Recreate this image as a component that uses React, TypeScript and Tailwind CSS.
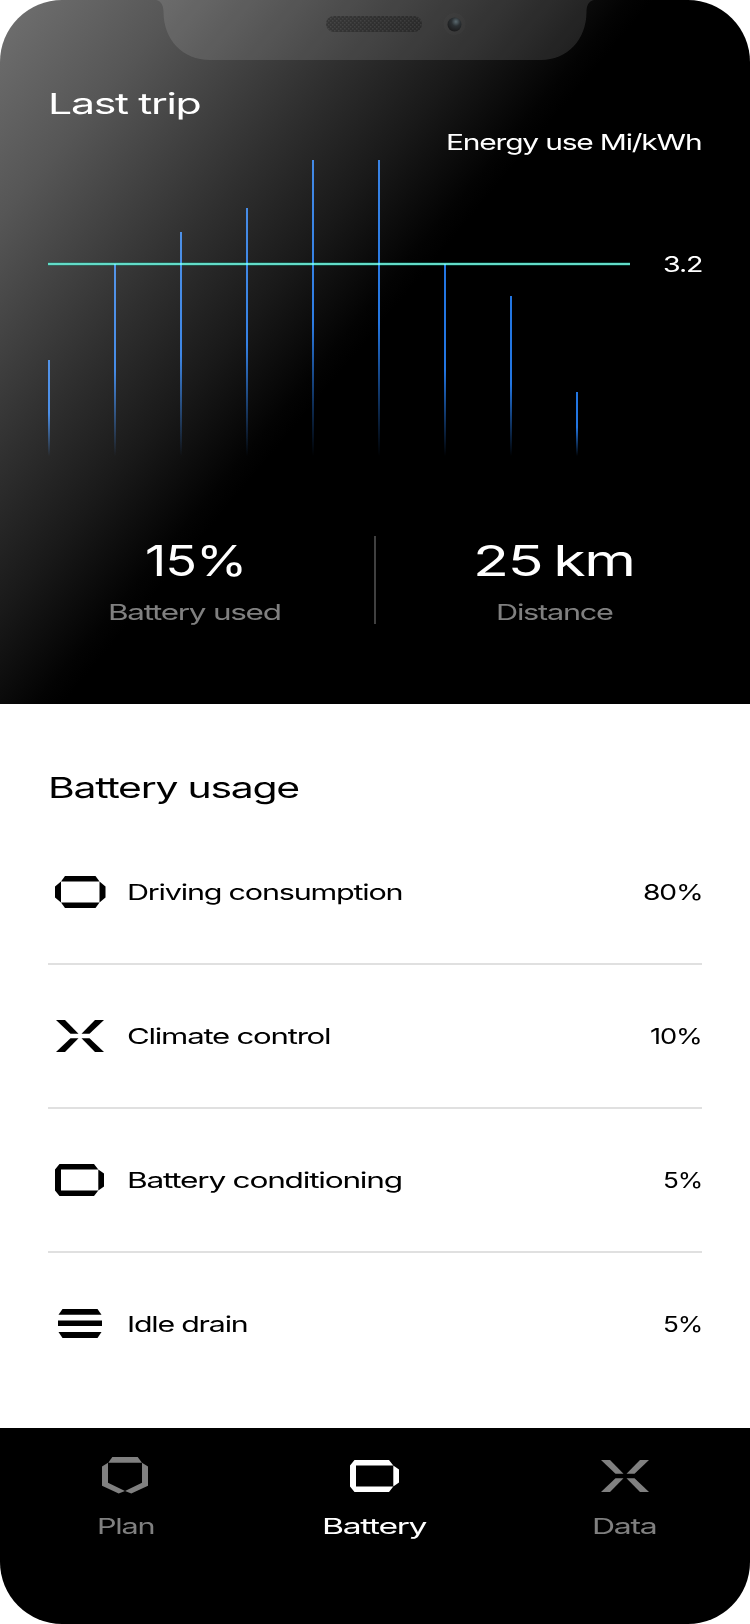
import { useLayoutEffect, useRef, useState } from "react";
import type { ReactNode } from "react";

type WideTextProps = {
  width: number;
  className?: string;
  children: ReactNode;
};

/** Extended lettering: stretches a line of text to the given width. */
function WideText({ width, className = "", children }: WideTextProps) {
  const ref = useRef<HTMLSpanElement>(null);
  const [scale, setScale] = useState(1);

  useLayoutEffect(() => {
    if (ref.current) setScale(width / ref.current.offsetWidth);
  }, [width]);

  return (
    <div className={className} style={{ width }}>
      <span
        ref={ref}
        className="inline-block origin-left whitespace-nowrap"
        style={{ transform: `scaleX(${scale})` }}
      >
        {children}
      </span>
    </div>
  );
}

function DrivingIcon() {
  return (
    <svg width="51" height="32" viewBox="0 0 51 32" fill="currentColor">
      <path d="M10 0H40.500L44.500 5.500H6Z" />
      <path d="M10 32H40.500L44.500 26.500H6Z" />
      <path d="M6 5.500V26.500L0 21.500V10.500Z" />
      <path d="M44.500 5.500V26.500L50.500 21.500V10.500Z" />
    </svg>
  );
}

function CrossIcon() {
  return (
    <svg width="48" height="32" viewBox="0 0 48 32" fill="currentColor">
      <path d="M0 0H9L22.500 13.700H14.500Z" />
      <path d="M48 0H39L25.500 13.700H33.500Z" />
      <path d="M0 32H9L22.500 18.300H14.500Z" />
      <path d="M48 32H39L25.500 18.300H33.500Z" />
    </svg>
  );
}

function BatteryIcon() {
  return (
    <svg className="mr-0.5" width="49" height="32" viewBox="0 0 49 32" fill="currentColor">
      <path d="M4.500 0H39L43.300 5.500H6V26.500H43.300L39 32H4.500L0 26.500V5.500Z" />
      <path d="M43.300 5.500L49 9.500V22.500L43.300 26.500Z" />
    </svg>
  );
}

function IdleIcon() {
  return (
    <svg className="-mt-px" width="44" height="29" viewBox="0 0 44 29" fill="currentColor">
      <path d="M4.500 0H39.500L43.500 5.700H0.500Z" />
      <path d="M0 11.500H44V17H0Z" />
      <path d="M0.500 23H43.500L39.500 29H4.500Z" />
    </svg>
  );
}

function PlanIcon() {
  return (
    <svg width="46" height="37" viewBox="0 0 46 37" fill="currentColor">
      <path d="M10.300 0H35.700L40 5.700H6.300Z" />
      <path d="M6 5.700V25.700L23 34L16.700 36.500L0 28.700V9.500Z" />
      <path d="M40 5.700V25.700L23 34L29.300 36.500L46 28.700V9.500Z" />
    </svg>
  );
}

// x and top of each bar, every bar fades out at the base line
const bars = [
  { x: 0, top: 200 },
  { x: 66, top: 104 },
  { x: 132, top: 72 },
  { x: 198, top: 48 },
  { x: 264, top: 0 },
  { x: 330, top: 0 },
  { x: 396, top: 104 },
  { x: 462, top: 136 },
  { x: 528, top: 232 },
];

function EnergyChart() {
  return (
    <svg width="582" height="298" viewBox="0 0 582 298">
      <defs>
        <linearGradient id="bar" x1="0" y1="0" x2="0" y2="1">
          <stop offset="0" stopColor="#2376e2" />
          <stop offset="0.55" stopColor="#2376e2" />
          <stop offset="1" stopColor="#2376e2" stopOpacity="0" />
        </linearGradient>
      </defs>
      <rect x="0" y="102" width="582" height="4" fill="#12b89a" opacity="0.25" />
      <rect x="0" y="103" width="582" height="2" fill="#62dcc8" />
      {bars.map((bar) => (
        <rect
          key={bar.x}
          className="mix-blend-screen"
          x={bar.x}
          y={bar.top}
          width="2"
          height={296 - bar.top}
          fill="url(#bar)"
        />
      ))}
    </svg>
  );
}

function Notch() {
  return (
    <svg className="absolute left-0 top-0" width="750" height="62" viewBox="0 0 750 62">
      <defs>
        <pattern id="mesh" width="4" height="4" patternUnits="userSpaceOnUse">
          <rect width="4" height="4" fill="#000" fillOpacity="0.3" />
          <rect width="1.500" height="1.500" fill="#fff" fillOpacity="0.08" />
          <rect x="2" y="2" width="1.500" height="1.500" fill="#fff" fillOpacity="0.08" />
        </pattern>
        <radialGradient id="lens" cx="0.6" cy="0.3" r="0.7">
          <stop offset="0" stopColor="#5b6a70" />
          <stop offset="0.45" stopColor="#2b3033" />
          <stop offset="1" stopColor="#1c1c1d" />
        </radialGradient>
      </defs>
      <path
        d="M156 0C161 1 163.500 5 163.500 12C163.500 40 183 60 210 60H541C567 60 586.500 40 586.500 12C586.500 5 589 1 594 0Z"
        fill="#fff"
        fillOpacity="0.11"
      />
      <rect x="326" y="16" width="96" height="16" rx="8" fill="url(#mesh)" />
      <circle cx="454.500" cy="24" r="11" fill="#fff" fillOpacity="0.02" />
      <circle cx="454.500" cy="24.500" r="7" fill="url(#lens)" />
    </svg>
  );
}

const usage = [
  { label: "Driving consumption", width: 275, value: "80%", valueWidth: 59, icon: <DrivingIcon /> },
  { label: "Climate control", width: 204, value: "10%", valueWidth: 52, icon: <CrossIcon /> },
  { label: "Battery conditioning", width: 275, value: "5%", valueWidth: 39, icon: <BatteryIcon /> },
  { label: "Idle drain", width: 120, value: "5%", valueWidth: 39, icon: <IdleIcon /> },
];

export default function App() {
  return (
    <div className="flex h-[1624px] w-[750px] flex-col overflow-hidden bg-white font-['Inter',sans-serif] text-[22px] leading-8 tracking-[-0.04em] text-black">
      <div className="flex h-full flex-col overflow-hidden rounded-[62px]">
        {/* Last trip */}
        <section className="relative flex h-[704px] shrink-0 flex-col bg-[linear-gradient(130deg,#717171_0px,#565656_140px,#2f2f2f_300px,#191919_395px,#030303_480px,#000_500px)] px-12 text-white">
          <Notch />
          <WideText width={152} className="mt-[84px] text-[29px] leading-10">
            Last trip
          </WideText>
          <WideText width={256} className="mt-0.5 self-end">
            Energy use Mi/kWh
          </WideText>
          <div className="mt-0.5 flex items-start justify-between">
            <EnergyChart />
            <WideText width={39} className="mt-[88px]">
              3.2
            </WideText>
          </div>
          <div className="mt-[78px] flex h-[88px] items-stretch">
            <div className="flex w-[326px] flex-col items-center pr-8">
              <WideText width={101} className="text-[43px] leading-[48px]">
                15%
              </WideText>
              <WideText width={173} className="mt-3 -ml-0.5 text-[#808080]">
                Battery used
              </WideText>
            </div>
            <div className="w-0.5 bg-[#404040]" />
            <div className="flex w-[326px] flex-col items-center pl-[30px]">
              <WideText width={162} className="text-[43px] leading-[48px] [word-spacing:-0.08em]">
                25 km
              </WideText>
              <WideText width={117} className="mt-3 text-[#808080]">
                Distance
              </WideText>
            </div>
          </div>
        </section>

        {/* Battery usage */}
        <section className="flex h-[724px] shrink-0 flex-col bg-white px-12 pt-[64px]">
          <WideText width={251} className="text-[29px] leading-10">
            Battery usage
          </WideText>
          <ul className="mt-[13px]">
            {usage.map((item) => (
              <li
                key={item.label}
                className="flex h-36 items-center border-b-2 border-[#e0e0e0] last:border-transparent"
              >
                <div className="flex w-16 justify-center">{item.icon}</div>
                <WideText width={item.width} className="ml-[15px]">
                  {item.label}
                </WideText>
                <WideText width={item.valueWidth} className="ml-auto">
                  {item.value}
                </WideText>
              </li>
            ))}
          </ul>
        </section>

        {/* Tab bar */}
        <nav className="flex grow justify-between bg-black text-[#808080]">
          <div className="flex w-[250px] flex-col items-center">
            <div className="flex h-[82px] items-center pt-[13px]">
              <PlanIcon />
            </div>
            <WideText width={57}>Plan</WideText>
          </div>
          <div className="flex w-[250px] flex-col items-center text-white">
            <div className="flex h-[82px] items-center pt-[14px]">
              <BatteryIcon />
            </div>
            <WideText width={104} className="-ml-0.5">
              Battery
            </WideText>
          </div>
          <div className="flex w-[250px] flex-col items-center">
            <div className="flex h-[82px] items-center pt-[14px]">
              <CrossIcon />
            </div>
            <WideText width={64} className="-ml-0.5">
              Data
            </WideText>
          </div>
        </nav>
      </div>
    </div>
  );
}
